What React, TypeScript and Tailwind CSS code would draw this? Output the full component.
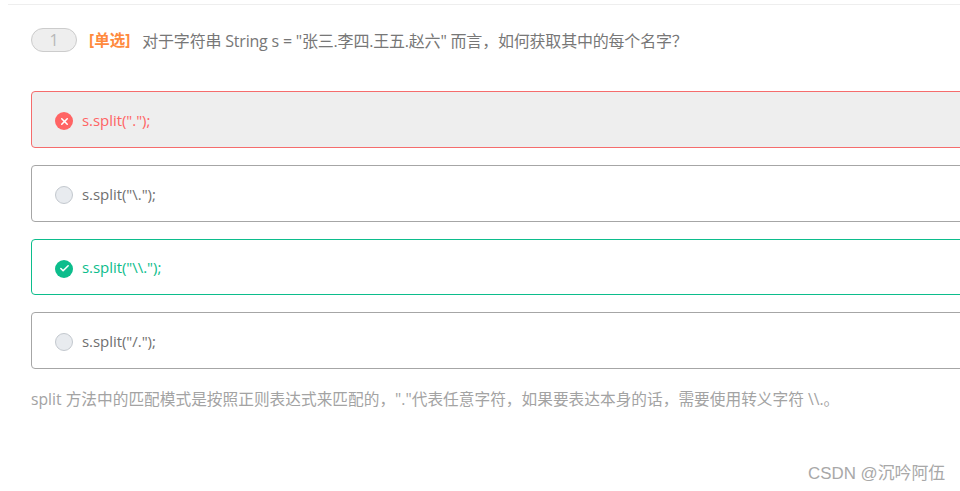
import { Check, X } from "lucide-react";

type OptionState = "wrong" | "idle" | "right";

const options: { text: string; state: OptionState; height: string; gap: string }[] = [
  { text: 's.split(".");', state: "wrong", height: "h-[57px]", gap: "mb-[17px]" },
  { text: 's.split("\\.");', state: "idle", height: "h-[57px]", gap: "mb-[17px]" },
  { text: 's.split("\\\\.");', state: "right", height: "h-[56px]", gap: "mb-[17px]" },
  { text: 's.split("/.");', state: "idle", height: "h-[57px]", gap: "mb-0" },
];

function OptionIcon({ state }: { state: OptionState }) {
  if (state === "wrong") {
    return (
      <span className="flex h-[18px] w-[18px] shrink-0 items-center justify-center rounded-full bg-[#ff6464]">
        <X className="h-[11px] w-[11px] text-white" strokeWidth={3.4} />
      </span>
    );
  }
  if (state === "right") {
    return (
      <span className="flex h-[18px] w-[18px] shrink-0 items-center justify-center rounded-full bg-[#0cbd8c]">
        <Check className="h-[11px] w-[11px] text-white" strokeWidth={3.4} />
      </span>
    );
  }
  return <span className="h-[18px] w-[18px] shrink-0 rounded-full border border-[#c3c8ce] bg-[#e8ebef]" />;
}

function OptionRow({ text, state, height, gap }: { text: string; state: OptionState; height: string; gap: string }) {
  const box =
    state === "wrong"
      ? "border-[#f56c6c] bg-[#eeeeee] text-[#ff6464]"
      : state === "right"
        ? "border-[#0cbd8c] bg-white text-[#0cbd8c]"
        : "border-[#a6a6a6] bg-white text-[#707070]";
  return (
    <div className={`flex w-[1000px] items-center gap-[9px] rounded border pl-[23px] pt-[3px] text-[15px] ${height} ${gap} ${box}`}>
      <OptionIcon state={state} />
      <span className="relative -top-px tracking-[-0.05px]">{text}</span>
    </div>
  );
}

export default function App() {
  return (
    <div className="relative h-[491px] w-[960px] overflow-hidden bg-white font-['Open_Sans','Noto_Sans_CJK_SC',sans-serif]">
      <div className="ml-2 h-px bg-[#eeeeee] mt-1" />
      <div className="pl-[31px]">
        <div className="mt-[23px] flex h-6 items-center">
          <span className="flex h-6 w-[46px] items-center justify-center rounded-xl border border-[#cccccc] bg-[#eeeeee] text-base text-[#b8b8b8]">
            1
          </span>
          <span className="relative top-px ml-3 text-[15.5px] font-bold text-[#ff8a3d]">[单选]</span>
          <span className="relative top-px ml-3 text-base tracking-[-0.2px] text-[#777777]">
            对于字符串 String s = "张三.李四.王五.赵六" 而言，如何获取其中的每个名字？
          </span>
        </div>
        <div className="mt-[39px]">
          {options.map((o) => (
            <OptionRow key={o.text} {...o} />
          ))}
        </div>
        <p className="mt-[19px] whitespace-nowrap text-[15.7px] text-[#a3a3a3]">
          split 方法中的匹配模式是按照正则表达式来匹配的，"."代表任意字符，如果要表达本身的话，需要使用转义字符 \\.。
        </p>
      </div>
      <span className="absolute left-[808px] top-[461px] font-['Liberation_Sans','Noto_Sans_CJK_SC',sans-serif] text-[16.9px] text-[#a8a8a8]">
        CSDN @沉吟阿伍
      </span>
    </div>
  );
}
